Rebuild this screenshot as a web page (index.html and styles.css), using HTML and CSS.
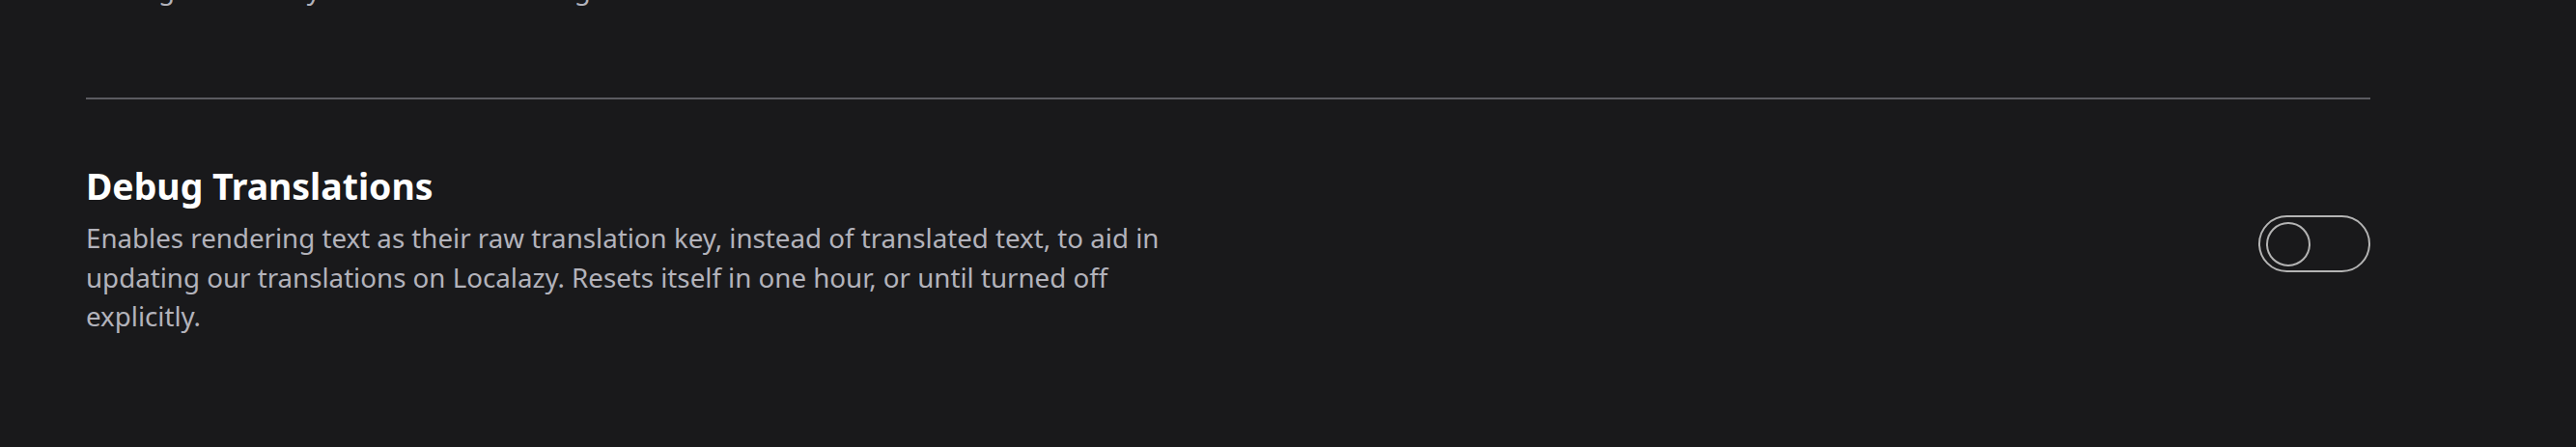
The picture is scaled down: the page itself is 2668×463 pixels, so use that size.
FILE: index.html
```html
<!DOCTYPE html>
<html lang="en">
<head>
<meta charset="utf-8">
<title>Debug Translations</title>
<link rel="stylesheet" href="styles.css">
</head>
<body>
<main class="settings">
  <p class="prev-text">Settings are locally stored in local storage.</p>
  <hr class="divider">
  <section class="setting-row">
    <div class="setting-text">
      <h2 class="setting-title">Debug Translations</h2>
      <p class="setting-desc">Enables rendering text as their raw translation key, instead of translated text, to aid in updating our translations on Localazy. Resets itself in one hour, or until turned off explicitly.</p>
    </div>
    <button class="toggle" type="button" aria-pressed="false" aria-label="Debug Translations">
      <span class="knob"></span>
    </button>
  </section>
</main>
</body>
</html>
```

FILE: styles.css
```css
html, body {
  margin: 0;
  padding: 0;
  background: #19191b;
  height: 100%;
  overflow: hidden;
}

.settings {
  width: 2366px;
  padding-left: 89px;
  font-family: "Noto Sans", "Open Sans", sans-serif;
  display: flex;
  flex-direction: column;
}

.prev-text {
  margin: -32px 0 0 0;
  font-size: 27.7px;
  line-height: 40.8px;
  color: #b3b3bb;
}

.divider {
  margin: 92px 0 0 0;
  border: 0;
  height: 2px;
  background: #5b5b60;
}

.setting-row {
  margin-top: 64px;
  display: flex;
  align-items: center;
  justify-content: space-between;
}

.setting-text {
  max-width: 1150px;
  display: flex;
  flex-direction: column;
  gap: 8px;
}

.setting-title {
  margin: 0;
  font-size: 37.4px;
  font-weight: 700;
  line-height: 51px;
  color: #ffffff;
}

.setting-desc {
  margin: 0;
  font-size: 27.7px;
  line-height: 40.8px;
  color: #b3b3bb;
}

.toggle {
  box-sizing: border-box;
  width: 116px;
  height: 59px;
  margin-bottom: 9px;
  padding: 0 0 0 6px;
  border: 2px solid #b4b4b4;
  border-radius: 30px;
  background: transparent;
  display: flex;
  align-items: center;
  cursor: pointer;
}

.knob {
  box-sizing: border-box;
  width: 46px;
  height: 46px;
  border: 2px solid #b4b4b4;
  border-radius: 50%;
}
```
